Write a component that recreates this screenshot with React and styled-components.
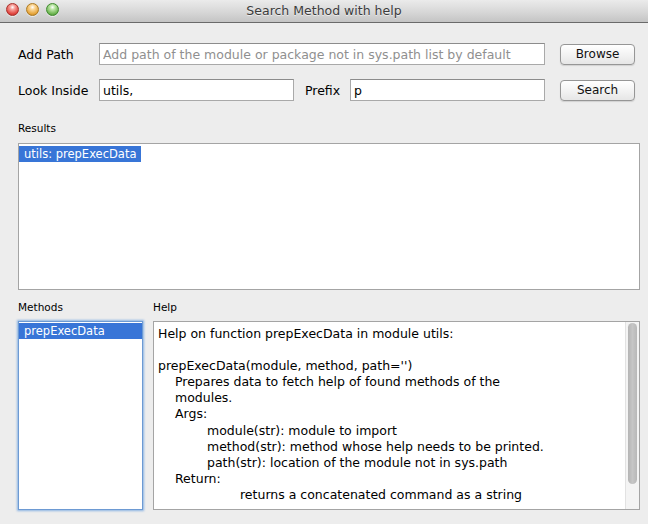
import React from "react";
import styled, { createGlobalStyle } from "styled-components";

const GlobalStyle = createGlobalStyle`
  html, body { margin: 0; padding: 0; background: #ededed; }
  body { font-family: "DejaVu Sans", "Liberation Sans", sans-serif; color: #000; }
  * { box-sizing: border-box; }
`;

const Window = styled.div`
  width: 648px;
  height: 524px;
  background: #ededed;
  display: flex;
  flex-direction: column;
  overflow: hidden;
`;

const TitleBar = styled.div`
  height: 23px;
  flex: none;
  display: grid;
  grid-template-columns: 1fr auto 1fr;
  align-items: center;
  background: linear-gradient(#ebebeb, #d5d5d5 60%, #c4c4c4);
  border-bottom: 1px solid #6a6a6a;
`;

const Lights = styled.div`
  display: flex;
  gap: 7px;
  padding-left: 6px;
  padding-bottom: 3px;
`;

const Light = styled.span`
  width: 13px;
  height: 13px;
  border-radius: 50%;
  border: 1px solid ${(p) => p.$edge};
  background: radial-gradient(circle at 50% 30%, #ffffff 0, ${(p) => p.$light} 25%, ${(p) => p.$color} 70%, ${(p) => p.$edge} 100%);
  box-shadow: 0 1px 0 rgba(255, 255, 255, 0.6);
`;

const Title = styled.div`
  font-size: 12.5px;
  color: #3c3c3c;
  padding-bottom: 2px;
  text-shadow: 0 1px 0 rgba(255, 255, 255, 0.6);
`;

const Content = styled.div`
  flex: 1;
  display: flex;
  flex-direction: column;
  padding: 20px 8px 0 18px;
`;

const FormRow = styled.div`
  display: flex;
  align-items: center;
  height: 22px;
  margin-top: ${(p) => p.$top || 0}px;
`;

const Label = styled.label`
  font-size: 12.5px;
  width: ${(p) => p.$width}px;
  margin-left: ${(p) => p.$left || 0}px;
  flex: none;
`;

const Entry = styled.input`
  width: ${(p) => p.$width}px;
  height: 22px;
  flex: none;
  border: 1px solid #a9a9a9;
  border-top-color: #8c8c8c;
  background: #fff;
  font-family: "DejaVu Sans", "Liberation Sans", sans-serif;
  font-size: 12.5px;
  padding: 0 3px;
  margin: 0;
  outline: none;
  color: #000;
  &::placeholder { color: #8f8f8f; }
`;

const Button = styled.button`
  margin-left: 15px;
  width: 75px;
  height: 21px;
  flex: none;
  border: 1px solid #969696;
  border-radius: 4px;
  background: linear-gradient(#ffffff, #f3f3f3 50%, #e6e6e6);
  box-shadow: 0 1px 1px rgba(0, 0, 0, 0.12);
  font-family: "DejaVu Sans", "Liberation Sans", sans-serif;
  font-size: 12px;
  color: #111;
  padding: 0;
`;

const SectionLabel = styled.div`
  font-size: 10.5px;
  line-height: 14px;
  margin-top: ${(p) => p.$top}px;
`;

const ListBox = styled.div`
  background: #fff;
  border: 1px solid #a4a4a4;
  padding: 1px 0 0 0;
  height: ${(p) => p.$height}px;
  display: flex;
  flex-direction: column;
  align-items: flex-start;
`;

const FocusedList = styled(ListBox)`
  border-color: #6d9ad3;
  box-shadow: 0 0 2px 1px #8cb4e3;
  align-items: stretch;
`;

const ListItem = styled.div`
  font-size: 11.5px;
  line-height: 16px;
  height: 16px;
  padding: 0 5px;
  background: #3875d7;
  color: #fff;
  white-space: nowrap;
`;

const ResultItem = styled(ListItem)`
  padding: 0 5px;
  margin-top: 1px;
`;

const BottomLabels = styled.div`
  display: grid;
  grid-template-columns: 135px 1fr;
  margin-top: 10px;
`;

const BottomPanes = styled.div`
  display: grid;
  grid-template-columns: 125px 1fr;
  gap: 10px;
  margin-top: 7px;
`;

const HelpBox = styled.div`
  height: 189px;
  background: #fff;
  border: 1px solid #a4a4a4;
  display: flex;
`;

const HelpText = styled.div`
  flex: 1;
  padding: 4px 0 0 4px;
  font-size: 12.5px;
  line-height: 16.1px;
`;

const HelpLine = styled.div`
  height: 16.1px;
  padding-left: ${(p) => p.$indent}px;
  white-space: pre;
`;

const ScrollTrack = styled.div`
  width: 14px;
  flex: none;
  background: #f4f4f4;
  border-left: 1px solid #e2e2e2;
  padding: 1px 2px 0 2px;
`;

const Thumb = styled.div`
  height: 161px;
  width: 9px;
  border-radius: 5px;
  background: linear-gradient(90deg, #b4b4b4, #c6c6c6 50%, #b8b8b8);
`;

const helpLines = [
  [0, "Help on function prepExecData in module utils:"],
  [0, ""],
  [0, "prepExecData(module, method, path='')"],
  [17, "Prepares data to fetch help of found methods of the"],
  [17, "modules."],
  [17, "Args:"],
  [49, "module(str): module to import"],
  [49, "method(str): method whose help needs to be printed."],
  [49, "path(str): location of the module not in sys.path"],
  [17, "Return:"],
  [82, "returns a concatenated command as a string"],
];

export default function App() {
  return (
    <>
      <GlobalStyle />
      <Window>
        <TitleBar>
          <Lights>
            <Light $color="#e0443e" $light="#f7a39d" $edge="#a8302b" />
            <Light $color="#e5a43a" $light="#fbd89a" $edge="#ad7a22" />
            <Light $color="#6cb44f" $light="#bde6a8" $edge="#3f8a2f" />
          </Lights>
          <Title>Search Method with help</Title>
          <span />
        </TitleBar>
        <Content>
          <FormRow>
            <Label $width={81}>Add Path</Label>
            <Entry
              $width={446}
              placeholder="Add path of the module or package not in sys.path list by default"
            />
            <Button>Browse</Button>
          </FormRow>
          <FormRow $top={14}>
            <Label $width={81}>Look Inside</Label>
            <Entry $width={195} defaultValue="utils," />
            <Label $width={45} $left={11}>Prefix</Label>
            <Entry $width={195} defaultValue="p" />
            <Button>Search</Button>
          </FormRow>
          <SectionLabel $top={20}>Results</SectionLabel>
          <ListBox $height={147} style={{ marginTop: 8 }}>
            <ResultItem>utils: prepExecData</ResultItem>
          </ListBox>
          <BottomLabels>
            <SectionLabel $top={0}>Methods</SectionLabel>
            <SectionLabel $top={0}>Help</SectionLabel>
          </BottomLabels>
          <BottomPanes>
            <FocusedList $height={189}>
              <ListItem>prepExecData</ListItem>
            </FocusedList>
            <HelpBox>
              <HelpText>
                {helpLines.map(([indent, text], i) => (
                  <HelpLine key={i} $indent={indent}>
                    {text}
                  </HelpLine>
                ))}
              </HelpText>
              <ScrollTrack>
                <Thumb />
              </ScrollTrack>
            </HelpBox>
          </BottomPanes>
        </Content>
      </Window>
    </>
  );
}
